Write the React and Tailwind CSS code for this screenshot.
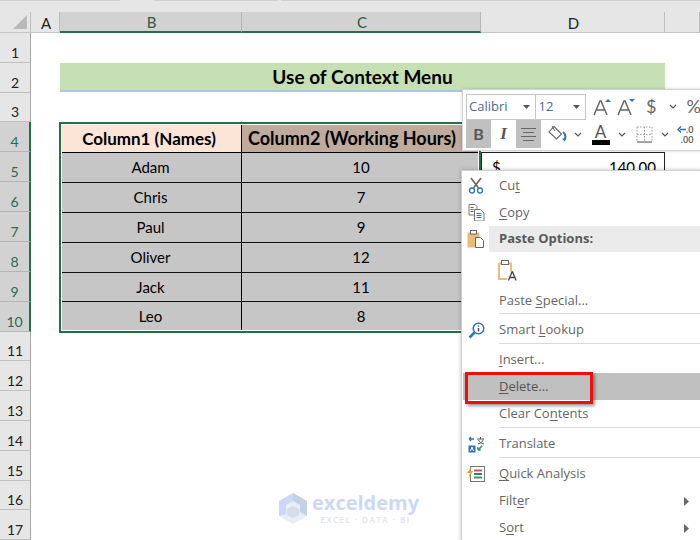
import React from "react";

const ROWS = [
  { n: 1, h: "h-[30px]" },
  { n: 2, h: "h-[30px]" },
  { n: 3, h: "h-[29px]" },
  { n: 4, h: "h-[30px]", on: true },
  { n: 5, h: "h-[30px]", on: true },
  { n: 6, h: "h-[30px]", on: true },
  { n: 7, h: "h-[30px]", on: true },
  { n: 8, h: "h-[30px]", on: true },
  { n: 9, h: "h-[30px]", on: true },
  { n: 10, h: "h-[30px]", on: true },
  { n: 11, h: "h-[29px]" },
  { n: 12, h: "h-[30px]" },
  { n: 13, h: "h-[30px]" },
  { n: 14, h: "h-[30px]" },
  { n: 15, h: "h-[30px]" },
  { n: 16, h: "h-[29px]" },
  { n: 17, h: "h-[30px]" },
];

const PEOPLE = [
  { name: "Adam", hours: "10", h: "h-[30px]" },
  { name: "Chris", hours: "7", h: "h-[30px]" },
  { name: "Paul", hours: "9", h: "h-[30px]" },
  { name: "Oliver", hours: "12", h: "h-[30px]" },
  { name: "Jack", hours: "11", h: "h-[29px]" },
  { name: "Leo", hours: "8", h: "h-[28px]" },
];

const CALIBRI = "font-['Lato','Open_Sans',sans-serif]";
const SEGOE = "font-['Open_Sans','Noto_Sans',sans-serif]";

function Chevron({ className = "" }) {
  return (
    <svg width="8" height="5" viewBox="0 0 8 5" className={className}>
      <path d="M1 1l3 3 3-3" fill="none" stroke="#555" strokeWidth="1.2" />
    </svg>
  );
}

function Caret() {
  return (
    <svg width="7" height="4" viewBox="0 0 7 4">
      <path d="M0 0h7L3.5 4z" fill="#555" />
    </svg>
  );
}

function GrowA({ down }) {
  return (
    <svg width="22" height="20" viewBox="0 0 22 20">
      <path d="M3 18L9 4h1l6 14M5.5 13h8" fill="none" stroke="#666" strokeWidth="1.5" />
      <path d={down ? "M14 2h6l-3 3z" : "M14 5h6l-3-3z"} fill="#2e75b6" />
    </svg>
  );
}

function FillIcon() {
  return (
    <svg width="20" height="19" viewBox="0 0 20 19">
      <path d="M7 1.5l7.5 7.5-5 5L2 7z" fill="#fff" stroke="#666" strokeWidth="1.1" />
      <path d="M5 1l3 5" stroke="#666" strokeWidth="1" />
      <path d="M16 7c2.5 2 3 5 1.5 8" fill="none" stroke="#2e75b6" strokeWidth="2" />
      <path d="M15 13.5l2.5 3 1.5-3z" fill="#2e75b6" />
    </svg>
  );
}

function BordersIcon() {
  return (
    <svg width="17" height="17" viewBox="0 0 17 17">
      <path d="M1 1h15M1 8.5h15M1 1v15M16 1v15M8.5 1v15" fill="none" stroke="#999" strokeWidth="1" strokeDasharray="1.5 1.5" />
      <path d="M1 16h15" stroke="#666" strokeWidth="1.2" />
    </svg>
  );
}

function Scissors() {
  return (
    <svg width="16" height="17" viewBox="0 0 16 17">
      <path d="M3 1l7.5 10M13 1L5.5 11" stroke="#666" strokeWidth="1.6" fill="none" />
      <circle cx="4" cy="13.5" r="2.5" fill="none" stroke="#2e75b6" strokeWidth="1.3" />
      <circle cx="12" cy="13.5" r="2.5" fill="none" stroke="#2e75b6" strokeWidth="1.3" />
    </svg>
  );
}

function CopyIcon() {
  return (
    <svg width="17" height="17" viewBox="0 0 17 17">
      <path d="M1 .5h6l2 2V11H1z" fill="#fff" stroke="#777" />
      <path d="M6.5 5.5h6l3.5 3.5v8H6.5z" fill="#fff" stroke="#777" />
      <path d="M2.5 3.500h3M2.5 5.500h3M2.5 7.500h3" stroke="#2e75b6" />
      <path d="M8.5 9.500h5M8.5 11.500h5M8.5 13.500h5" stroke="#2e75b6" />
    </svg>
  );
}

function PasteIcon() {
  return (
    <svg width="18" height="18" viewBox="0 0 18 18">
      <rect x="0.5" y="2.5" width="12" height="15" fill="#edbb78" />
      <rect x="3.5" y="0.5" width="6" height="3.5" fill="#fff" stroke="#666" />
      <path d="M8.5 7.500h5l3 3v7h-8z" fill="#fff" stroke="#666" />
    </svg>
  );
}

function PasteTextIcon() {
  return (
    <svg width="20" height="21" viewBox="0 0 20 21">
      <path d="M1 3.5h2M1 3v16h8M11 3.500h2v8" fill="none" stroke="#edbb78" strokeWidth="2" />
      <rect x="3.5" y="0.5" width="7" height="4" fill="#fff" stroke="#666" />
      <path d="M10.5 20.500l3.500-8.500h.6l3.500 8.500M11.800 17.500h5.400" fill="none" stroke="#444" strokeWidth="1.3" />
    </svg>
  );
}

function LookupIcon() {
  return (
    <svg width="17" height="17" viewBox="0 0 17 17">
      <circle cx="10.5" cy="6.5" r="5.3" fill="#fff" stroke="#2e75b6" strokeWidth="1.5" />
      <path d="M6.5 10.500L1.500 15.500" stroke="#2e75b6" strokeWidth="2.5" />
      <path d="M10.500 3.500v1.300M10.500 6v3.500" stroke="#444" strokeWidth="1.4" />
    </svg>
  );
}

function TranslateIcon() {
  return (
    <svg width="17" height="17" viewBox="0 0 17 17">
      <rect x="0.5" y="9.5" width="7" height="7" fill="#2e75b6" />
      <path d="M2.500 15l1.500-4 1.500 4" fill="none" stroke="#fff" />
      <path d="M1 3h5M1 3l2-2M1 3l2 2" fill="none" stroke="#2e75b6" strokeWidth="1.3" />
      <path d="M9 3h7M12.500 1v2M10 8c3-1 5-2.500 5-4M10.500 4c1 2 3 3.500 5.500 4" fill="none" stroke="#555" />
      <path d="M9 12h6M15 12l-2-2M15 12l-2 2" fill="none" stroke="#3a9a5b" strokeWidth="1.5" transform="rotate(135 12 12)" />
    </svg>
  );
}

function QuickIcon() {
  return (
    <svg width="18" height="16" viewBox="0 0 18 16">
      <rect x="3.5" y="0.5" width="14" height="15" fill="#fff" stroke="#777" />
      <path d="M7 4.500h8" stroke="#c55a4a" strokeWidth="2" />
      <path d="M7 8h8" stroke="#2e75b6" strokeWidth="2" />
      <path d="M7 11.500h8" stroke="#3a9a5b" strokeWidth="2" />
      <path d="M5 0L0 7h3l-2 6 5-8H3z" fill="#f0a030" />
    </svg>
  );
}

function CubeLogo() {
  return (
    <svg width="28" height="31" viewBox="0 0 28 31">
      <path d="M14 0l14 8v15l-14 8L0 23V8z" fill="#e6edf6" />
      <path d="M14 0l14 8v15l-7-4V12l-7-4z" fill="#c4d0e6" />
      <path d="M14 0v8l-7 4v9l-7 2V8z" fill="#cbd9f7" />
      <path d="M14 13l6 3v6l-6 3-6-3v-6z" fill="#d6deea" />
    </svg>
  );
}

function Key({ children }) {
  return <span className="underline underline-offset-2 decoration-1">{children}</span>;
}

function Item({ icon, children, arrow, className = "h-[27px]" }) {
  return (
    <div className={`flex items-center ${className}`}>
      <div className="w-[26px] flex justify-center shrink-0">{icon}</div>
      <div className="pl-[10px] flex-1">{children}</div>
      {arrow && (
        <svg width="5" height="9" viewBox="0 0 5 9" className="mr-[12px]">
          <path d="M0 0l5 4.5-5 4.5z" fill="#666" />
        </svg>
      )}
    </div>
  );
}

function Sep() {
  return <div className="ml-[36px] h-[1px] bg-[#d9d9d9]" />;
}

function ColHead({ w, on, children }) {
  return (
    <div
      className={`${w} h-full flex items-center justify-center border-r text-[15px] pt-[2px] pl-[2px] ${
        on
          ? "bg-[#d2d2d2] border-[#b5b5b5] border-b-2 border-b-[#217346] text-[#2a5a45]"
          : "bg-[#e6e6e6] border-[#bdbdbd] border-b border-b-[#c6c6c6] text-[#222]"
      }`}
    >
      {children}
    </div>
  );
}

export default function App() {
  return (
    <div className={`relative w-[700px] h-[540px] overflow-hidden bg-white ${CALIBRI}`}>
      <div className="h-[12px] bg-[#e6e6e6] flex items-start">
        <div className="w-[120px] h-[1px] bg-[#cfcfcf]" />
        <div className="ml-[34px] w-[124px] h-[1px] bg-[#cfcfcf]" />
        <div className="ml-[3px] flex-1 h-[1px] bg-[#cfcfcf]" />
      </div>

      {/* column headers */}
      <div className="flex h-[21px] bg-[#e6e6e6]">
        <div className="w-[31px] h-full flex items-end justify-end pr-[3px] pb-[3px] border-r border-[#bdbdbd] border-b border-b-[#c6c6c6]">
          <div className="w-0 h-0 border-l-[14px] border-l-transparent border-b-[14px] border-b-[#b9b9b9]" />
        </div>
        <ColHead w="w-[29px]">A</ColHead>
        <ColHead w="w-[182px]" on>B</ColHead>
        <ColHead w="w-[239px]" on>C</ColHead>
        <ColHead w="w-[184px]">D</ColHead>
        <ColHead w="w-[35px]" />
      </div>

      <div className="flex">
        {/* row headers */}
        <div className="w-[31px] shrink-0">
          {ROWS.map((r) => (
            <div
              key={r.n}
              className={`${r.h} flex items-end justify-center pb-[1px] text-[14px] leading-[16px] border-b ${
                r.on
                  ? "bg-[#d2d2d2] border-b-[#b5b5b5] border-r-2 border-r-[#217346] text-[#2a6b50]"
                  : "bg-[#e6e6e6] border-b-[#c0c0c0] border-r border-r-[#a6a6a6] text-[#222]"
              }`}
            >
              {r.n}
            </div>
          ))}
        </div>

        {/* sheet */}
        <div className="flex-1 pl-[29px]">
          <div className="h-[30px]" />
          <div className="w-[605px] h-[29px] bg-[#c6e0b4] border-b-2 border-[#a9c6e8] flex items-center justify-center font-bold text-[19px] pt-[2px] text-black">
            Use of Context Menu
          </div>
          <div className="h-[30px]" />

          <div className="flex items-start">
            <div className="-ml-[1px] w-[422px] border-2 border-[#217346] p-[1px]">
              <div className="flex h-[28px] border-b border-black font-bold text-black">
                <div className="w-[180px] bg-[#fce4d6] border-r border-black flex items-center justify-center pr-[5px] text-[17px]">
                  Column1 (Names)
                </div>
                <div className="flex-1 bg-[#bfaa9e] flex items-center justify-center pr-[16px] text-[18px] whitespace-nowrap">
                  Column2 (Working Hours)
                </div>
              </div>
              {PEOPLE.map((p, i) => (
                <div
                  key={p.name}
                  className={`flex ${p.h} text-[15px] text-black bg-[#c6c6c6] ${
                    i < PEOPLE.length - 1 ? "border-b border-[#111]" : ""
                  }`}
                >
                  <div className="w-[180px] border-r border-black flex items-center justify-center pr-[2px]">{p.name}</div>
                  <div className="flex-1 flex items-center justify-center pl-[2px]">{p.hours}</div>
                </div>
              ))}
            </div>
            <div className="w-[184px] h-[30px] mt-[30px] border-t border-r border-l border-[#222] flex items-center justify-between pl-[10px] pr-[8px] text-[15px] text-black">
              <span>$</span>
              <span>140.00</span>
            </div>
          </div>
        </div>
      </div>

      {/* watermark */}
      <div className="absolute left-[279px] top-[493px] flex items-center gap-[5px]">
        <CubeLogo />
        <div className="flex flex-col items-center">
          <div className="font-['Open_Sans',sans-serif] font-bold text-[20px] leading-[20px] text-[#cbd9f7]">exceldemy</div>
          <div className="mt-[2px] font-['Open_Sans',sans-serif] font-semibold text-[8px] leading-[9px] tracking-[1.5px] text-[#dfe3e8] whitespace-nowrap">EXCEL · DATA · BI</div>
        </div>
      </div>

      {/* mini toolbar */}
      <div className={`absolute left-[462px] top-[89px] w-[240px] h-[62px] bg-white border border-[#d4d4d4] shadow-[0_0_3px_rgba(0,0,0,0.2)] pl-[3px] pt-[3px] text-[#555] ${SEGOE}`}>
        <div className="flex items-center h-[27px]">
          <div className="w-[71px] h-[26px] border border-[#c6c6c6] flex items-center justify-between pl-[2px] pr-[5px] text-[13px] text-[#4a6a8a]">
            <span>Calibri</span>
            <Caret />
          </div>
          <div className="w-[51px] h-[26px] border border-l-0 border-[#c6c6c6] flex items-center justify-between pl-[3px] pr-[5px] text-[13px] text-[#4a6a8a]">
            <span>12</span>
            <Caret />
          </div>
          <div className="ml-[5px] w-[24px] flex justify-center"><GrowA /></div>
          <div className="w-[24px] flex justify-center"><GrowA down /></div>
          <div className={`w-[28px] text-center text-[18px] text-[#666] ${CALIBRI}`}>$</div>
          <div className="w-[16px] flex justify-center"><Chevron /></div>
          <div className={`ml-[6px] text-[18px] text-[#666] ${CALIBRI}`}>%</div>
        </div>
        <div className="flex items-center h-[28px]">
          <div className={`w-[25px] h-[28px] bg-[#c0c0c0] flex items-center justify-center font-bold text-[16px] text-[#555] ${CALIBRI}`}>B</div>
          <div className="w-[25px] h-[28px] flex items-center justify-center font-['Liberation_Serif',serif] italic font-bold text-[17px] text-[#555]">I</div>
          <div className="w-[25px] h-[28px] bg-[#c0c0c0] flex flex-col items-center justify-center gap-[3px]">
            <div className="w-[15px] h-[1px] bg-[#666]" />
            <div className="w-[11px] h-[1px] bg-[#666]" />
            <div className="w-[15px] h-[1px] bg-[#666]" />
            <div className="w-[11px] h-[1px] bg-[#666]" />
          </div>
          <div className="ml-[6px] w-[20px] flex justify-center"><FillIcon /></div>
          <div className="ml-[5px] w-[12px] flex justify-center"><Chevron /></div>
          <div className="ml-[7px] w-[19px] flex flex-col items-center">
            <span className={`text-[17px] leading-[17px] text-[#555] ${CALIBRI}`}>A</span>
            <div className="w-[18px] h-[5px] bg-black" />
          </div>
          <div className="ml-[6px] w-[12px] flex justify-center"><Chevron /></div>
          <div className="ml-[8px] w-[17px] flex justify-center"><BordersIcon /></div>
          <div className="ml-[5px] w-[14px] flex justify-center"><Chevron /></div>
          <div className="ml-[5px] flex flex-col items-end gap-[1px]">
            <div className="flex items-center">
              <svg width="9" height="7" viewBox="0 0 9 7">
                <path d="M9 3.5H3M4 .5L1 3.500l3 3" fill="none" stroke="#2e75b6" strokeWidth="1.5" />
              </svg>
              <span className={`text-[9px] leading-[9px] font-bold text-[#666] ${CALIBRI}`}>.0</span>
            </div>
            <span className={`text-[9px] leading-[9px] font-bold text-[#666] ${CALIBRI}`}>.00</span>
          </div>
        </div>
      </div>

      {/* context menu */}
      <div className={`absolute left-[461px] top-[170px] w-[241px] h-[372px] bg-white border border-[#cfcfcf] shadow-[0_0_4px_rgba(0,0,0,0.25)] pl-[1px] pt-[1px] text-[13px] text-[#666] ${SEGOE}`}>
        <Item icon={<Scissors />}>Cu<Key>t</Key></Item>
        <Item icon={<CopyIcon />}><Key>C</Key>opy</Item>
        <div className="flex items-center h-[26px]">
          <div className="w-[26px] flex justify-center shrink-0"><PasteIcon /></div>
          <div className="flex-1 h-full bg-[#ebebeb] flex items-center pl-[10px] font-bold text-[#595959]">Paste Options:</div>
        </div>
        <div className="h-[36px] pl-[35px] flex items-center"><PasteTextIcon /></div>
        <Item className="h-[25px]"><span>Paste <Key>S</Key>pecial...</span></Item>
        <Sep />
        <Item className="h-[29px] pt-[3px]" icon={<LookupIcon />}>Smart <Key>L</Key>ookup</Item>
        <Sep />
        <Item className="h-[29px] pt-[3px]"><Key>I</Key>nsert...</Item>
        <div className="relative h-[27px] bg-[#c0c0c0] flex items-center pl-[36px] pt-[1px] text-[#555]">
          <span><Key>D</Key>elete...</span>
          <div className="absolute left-[2px] top-[-1px] w-[128px] h-[32px] border-[3px] border-[#f20d0d] shadow-[2px_2px_3px_rgba(0,0,0,0.4)]" />
        </div>
        <Item className="h-[27px] pt-[1px]">Clear Co<Key>n</Key>tents</Item>
        <Sep />
        <Item className="h-[29px] pt-[3px]" icon={<TranslateIcon />}>Translate</Item>
        <Sep />
        <Item className="h-[29px] pt-[3px]" icon={<QuickIcon />}><Key>Q</Key>uick Analysis</Item>
        <Item className="h-[27px] pt-[1px]" arrow>Filt<Key>e</Key>r</Item>
        <Item className="h-[27px] pt-[1px]" arrow>S<Key>o</Key>rt</Item>
      </div>
    </div>
  );
}
